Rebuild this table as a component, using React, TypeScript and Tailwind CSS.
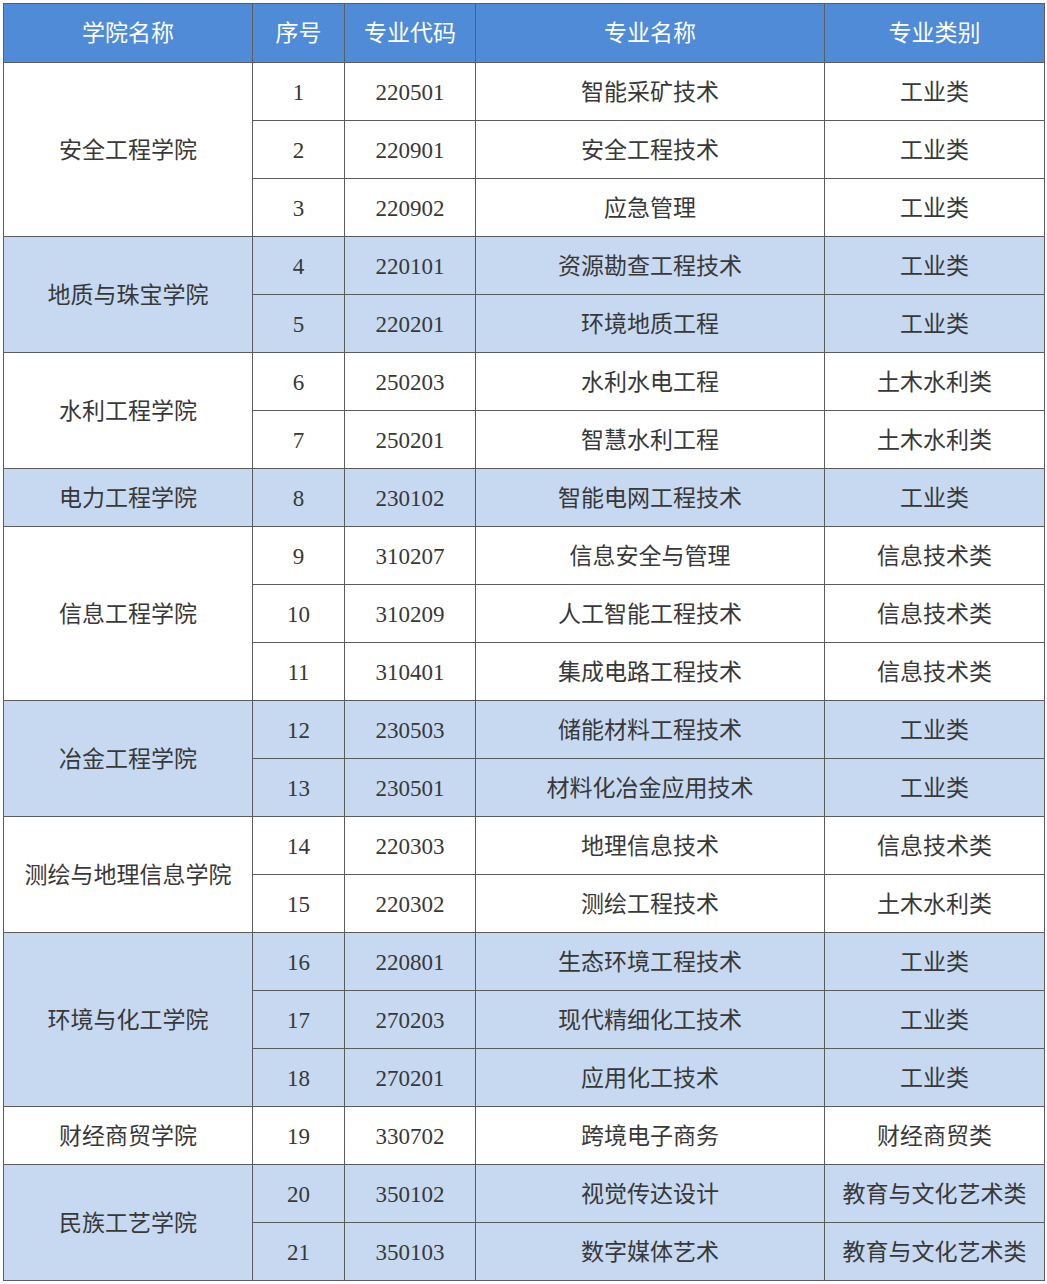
import React from 'react'

type Row = { no: number; code: string; name: string; type: string }
type Group = { college: string; rows: Row[] }

const GROUPS: Group[] = [
  {
    college: '安全工程学院',
    rows: [
      { no: 1, code: '220501', name: '智能采矿技术', type: '工业类' },
      { no: 2, code: '220901', name: '安全工程技术', type: '工业类' },
      { no: 3, code: '220902', name: '应急管理', type: '工业类' },
    ],
  },
  {
    college: '地质与珠宝学院',
    rows: [
      { no: 4, code: '220101', name: '资源勘查工程技术', type: '工业类' },
      { no: 5, code: '220201', name: '环境地质工程', type: '工业类' },
    ],
  },
  {
    college: '水利工程学院',
    rows: [
      { no: 6, code: '250203', name: '水利水电工程', type: '土木水利类' },
      { no: 7, code: '250201', name: '智慧水利工程', type: '土木水利类' },
    ],
  },
  {
    college: '电力工程学院',
    rows: [{ no: 8, code: '230102', name: '智能电网工程技术', type: '工业类' }],
  },
  {
    college: '信息工程学院',
    rows: [
      { no: 9, code: '310207', name: '信息安全与管理', type: '信息技术类' },
      { no: 10, code: '310209', name: '人工智能工程技术', type: '信息技术类' },
      { no: 11, code: '310401', name: '集成电路工程技术', type: '信息技术类' },
    ],
  },
  {
    college: '冶金工程学院',
    rows: [
      { no: 12, code: '230503', name: '储能材料工程技术', type: '工业类' },
      { no: 13, code: '230501', name: '材料化冶金应用技术', type: '工业类' },
    ],
  },
  {
    college: '测绘与地理信息学院',
    rows: [
      { no: 14, code: '220303', name: '地理信息技术', type: '信息技术类' },
      { no: 15, code: '220302', name: '测绘工程技术', type: '土木水利类' },
    ],
  },
  {
    college: '环境与化工学院',
    rows: [
      { no: 16, code: '220801', name: '生态环境工程技术', type: '工业类' },
      { no: 17, code: '270203', name: '现代精细化工技术', type: '工业类' },
      { no: 18, code: '270201', name: '应用化工技术', type: '工业类' },
    ],
  },
  {
    college: '财经商贸学院',
    rows: [{ no: 19, code: '330702', name: '跨境电子商务', type: '财经商贸类' }],
  },
  {
    college: '民族工艺学院',
    rows: [
      { no: 20, code: '350102', name: '视觉传达设计', type: '教育与文化艺术类' },
      { no: 21, code: '350103', name: '数字媒体艺术', type: '教育与文化艺术类' },
    ],
  },
]

const cell = 'border border-[#5c5c5c] text-center align-middle px-0 pb-0 pt-[3px]'

export default function App() {
  return (
    <div className="min-h-[1284px] w-[1047px] bg-white pl-[3px] pt-[3px]">
      <table
        className="table-fixed border-collapse text-[23px] text-[#383838]"
        style={{ fontFamily: '"Liberation Serif", "Noto Sans CJK SC", serif' }}
      >
        <colgroup>
          <col className="w-[249px]" />
          <col className="w-[92px]" />
          <col className="w-[131px]" />
          <col className="w-[349px]" />
          <col className="w-[220px]" />
        </colgroup>
        <thead>
          <tr className="h-[59px] bg-[#4f8bd6] text-white">
            <th className={`${cell} font-normal`}>学院名称</th>
            <th className={`${cell} font-normal`}>序号</th>
            <th className={`${cell} font-normal`}>专业代码</th>
            <th className={`${cell} font-normal`}>专业名称</th>
            <th className={`${cell} font-normal`}>专业类别</th>
          </tr>
        </thead>
        <tbody>
          {GROUPS.map((g, gi) => {
            const bg = gi % 2 === 1 ? 'bg-[#c6d9f1]' : 'bg-white'
            return g.rows.map((r, ri) => (
              <tr key={r.no} className={`h-[58px] ${bg}`}>
                {ri === 0 && (
                  <td className={cell} rowSpan={g.rows.length}>
                    {g.college}
                  </td>
                )}
                <td className={cell}>{r.no}</td>
                <td className={cell}>{r.code}</td>
                <td className={cell}>{r.name}</td>
                <td className={cell}>{r.type}</td>
              </tr>
            ))
          })}
        </tbody>
      </table>
    </div>
  )
}
